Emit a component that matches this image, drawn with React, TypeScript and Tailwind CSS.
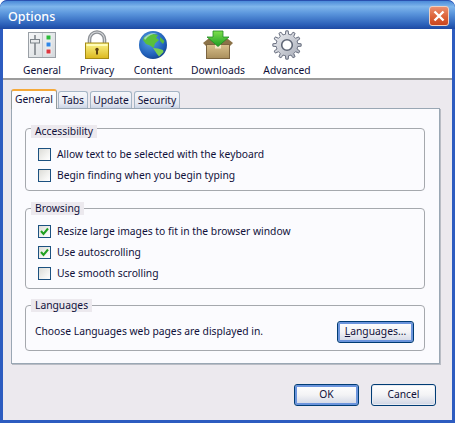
import React from "react";

function Check({ on, label }: { on?: boolean; label: string }) {
  return (
    <div className="flex items-center h-[13px] gap-[6px]">
      <span className="w-[13px] h-[13px] border border-[#1c5180] bg-[linear-gradient(135deg,#dcdcd7,#f6f6f4_70%,#ffffff)] flex items-center justify-center shrink-0">
        {on && (
          <svg width="11" height="11" viewBox="0 0 11 11">
            <path d="M2 5 L4.5 8 L9 2.5" fill="none" stroke="#21a121" strokeWidth="2" />
          </svg>
        )}
      </span>
      <span className="whitespace-nowrap mt-[1px]">{label}</span>
    </div>
  );
}

function Group({ title, className, legend, children }: { title: string; className: string; legend: string; children: React.ReactNode }) {
  return (
    <div className={`relative border border-[#a5a8ad] rounded-[4px] ${className}`}>
      <span className={`absolute left-[5px] px-[4px] bg-[#ece9ee] h-[13px] leading-[13px] whitespace-nowrap ${legend}`}>{title}</span>
      {children}
    </div>
  );
}

function Btn({ focus, className, children }: { focus?: boolean; className: string; children: React.ReactNode }) {
  return (
    <div
      className={`h-[22px] rounded-[3px] border border-[#003c74] flex items-center justify-center bg-[linear-gradient(180deg,#ffffff,#f3f3f5_50%,#cfd5e4)] ${focus ? "shadow-[inset_0_0_0_2px_#6b94dc]" : "shadow-[inset_0_0_0_1px_#e8ebf2]"} ${className}`}
    >
      {children}
    </div>
  );
}

function Tab({ active, className, children }: { active?: boolean; className: string; children: React.ReactNode }) {
  return active ? (
    <div className={`h-[20px] rounded-t-[3px] border-x border-[#919b9c] border-t-[2px] border-t-[#f5a93a] bg-[#fbfbfe] text-center leading-[17px] mb-[-1px] relative ${className}`}>
      {children}
    </div>
  ) : (
    <div className={`h-[17px] rounded-t-[3px] border-x border-t border-[#a5b5c5] bg-[linear-gradient(180deg,#f6f7fa,#e6e9f2_70%,#cbd5e6)] text-center leading-[16px] ${className}`}>
      {children}
    </div>
  );
}

const GeneralIcon = () => (
  <svg width="30" height="30" viewBox="0 0 30 30">
    <defs>
      <linearGradient id="gp" x1="0" y1="0" x2="1" y2="1">
        <stop offset="0" stopColor="#f6f7f8" />
        <stop offset="1" stopColor="#d4d8dc" />
      </linearGradient>
    </defs>
    <rect x="1.5" y="2.5" width="27" height="25" fill="url(#gp)" stroke="#9aa0a6" />
    <path d="M15.5 3v24" stroke="#c2c6ca" strokeWidth="1" />
    <path d="M8 5v20" stroke="#70767c" strokeWidth="1.4" />
    <rect x="3.5" y="9.5" width="9" height="3.5" fill="#e8eaec" stroke="#7d848a" />
    <rect x="19" y="5" width="5" height="5" fill="#2dbb3b" stroke="#eef0f0" />
    <rect x="19" y="12" width="5" height="5" fill="#2e86e8" stroke="#eef0f0" />
    <rect x="19" y="19" width="5" height="5" fill="#dd3740" stroke="#eef0f0" />
  </svg>
);

const PrivacyIcon = () => (
  <svg width="26" height="30" viewBox="0 0 26 30">
    <defs>
      <linearGradient id="ly" x1="0" y1="0" x2="0" y2="1">
        <stop offset="0" stopColor="#fbf48a" />
        <stop offset="1" stopColor="#dcb81e" />
      </linearGradient>
    </defs>
    <path d="M5.5 14V9.5a7.5 7.5 0 0 1 15 0V14" fill="none" stroke="#8b8f94" strokeWidth="3.6" />
    <path d="M5.5 14V9.5a7.5 7.5 0 0 1 15 0V14" fill="none" stroke="#d5d7da" strokeWidth="1.2" />
    <rect x="1.5" y="13" width="23" height="15.5" fill="url(#ly)" stroke="#a68b14" />
    <rect x="2.5" y="14" width="21" height="2" fill="#fffdb8" />
    <circle cx="13" cy="19.5" r="1.7" fill="#5d4210" />
    <rect x="12" y="20" width="2" height="4.5" fill="#5d4210" />
  </svg>
);

const ContentIcon = () => (
  <svg width="30" height="30" viewBox="0 0 30 30">
    <defs>
      <radialGradient id="gb" cx="0.4" cy="0.35" r="0.75">
        <stop offset="0" stopColor="#5aa5e8" />
        <stop offset="0.7" stopColor="#1f5eb8" />
        <stop offset="1" stopColor="#123a7a" />
      </radialGradient>
    </defs>
    <circle cx="15" cy="15" r="14" fill="url(#gb)" />
    <path d="M6 7 L13 3.5 L20 5 L18 8 L21 10 L17 13.5 L15.5 18 L12 15.5 L8 14 L5 10 Z" fill="#59c03c" />
    <path d="M15 18 L20 18.5 L25 20 L25.5 22 L21 26.5 L19 24 L17 21 Z" fill="#79cf52" />
    <path d="M22 7 L26.5 11 L25 14 L22 11 Z" fill="#57b83e" />
    <path d="M6 8 Q12 1.5 20 3.5 Q12 3 7 10 Z" fill="#c4e3f8" opacity="0.65" />
  </svg>
);

const DownloadsIcon = () => (
  <svg width="32" height="30" viewBox="0 0 32 30">
    <defs>
      <linearGradient id="bx" x1="0" y1="0" x2="0" y2="1">
        <stop offset="0" stopColor="#d8c08c" />
        <stop offset="1" stopColor="#a98e5c" />
      </linearGradient>
      <linearGradient id="ar" x1="0" y1="0" x2="0" y2="1">
        <stop offset="0" stopColor="#7ee04c" />
        <stop offset="1" stopColor="#1c9c24" />
      </linearGradient>
    </defs>
    <path d="M1 13 L6 9 H26 L31 13 L28 16 H4 Z" fill="#8b7248" />
    <rect x="4.5" y="14.5" width="23" height="14" fill="url(#bx)" stroke="#7b6440" />
    <rect x="13" y="14.5" width="6" height="4" fill="#efe3c2" />
    <path d="M11 1 H21 V7 H27 L16 16.5 L5 7 H11 Z" fill="url(#ar)" stroke="#1f8a22" strokeWidth="0.8" />
  </svg>
);

function gearPath() {
  const cx = 15, cy = 15, teeth = 12, ro = 14.2, ri = 10.8;
  let d = "";
  for (let i = 0; i < teeth; i++) {
    const a = (i / teeth) * Math.PI * 2;
    const w = (Math.PI * 2) / teeth;
    const pts = [
      [ri, a - w * 0.5],
      [ri, a - w * 0.28],
      [ro, a - w * 0.16],
      [ro, a + w * 0.16],
      [ri, a + w * 0.28],
    ];
    for (const [r, t] of pts) {
      d += `${d ? "L" : "M"}${(cx + r * Math.cos(t)).toFixed(2)} ${(cy + r * Math.sin(t)).toFixed(2)} `;
    }
  }
  return d + "Z";
}

const AdvancedIcon = () => (
  <svg width="30" height="30" viewBox="0 0 30 30">
    <defs>
      <linearGradient id="gr" x1="0" y1="0" x2="1" y2="1">
        <stop offset="0" stopColor="#f1f2f5" />
        <stop offset="1" stopColor="#a3a8b4" />
      </linearGradient>
    </defs>
    <path d={gearPath()} fill="url(#gr)" stroke="#6a7080" strokeWidth="1" />
    <circle cx="15" cy="15" r="5.3" fill="#fff" stroke="#5f6675" strokeWidth="1.6" />
  </svg>
);

function Tool({ icon, label, w, ml }: { icon: React.ReactNode; label: string; w: string; ml: string }) {
  return (
    <div className={`flex flex-col items-center ${w} ${ml}`}>
      <div className="h-[31px] flex items-center justify-center">{icon}</div>
      <span className="mt-[2px] leading-[16px] whitespace-nowrap">{label}</span>
    </div>
  );
}

export default function App() {
  return (
    <div className="[font-family:'Noto_Sans',sans-serif] w-[455px] h-[423px] text-[10.3px] text-[#10103a] flex flex-col overflow-hidden bg-[#2d5cc0] rounded-t-[7px]">
      <div className="h-[29px] shrink-0 rounded-t-[7px] border-t border-[#2a50b0] bg-[linear-gradient(180deg,#4a8ad8,#7fb6ec_20%,#5a95dc_45%,#2a5fb8_85%,#1d49a2)] flex items-center pl-[8px] pr-[6px]">
        <span className="text-white text-[12.5px] font-medium leading-none mt-[5px] flex-1">Options</span>
        <div className="w-[20px] h-[20px] rounded-[3px] border border-[#f0d0c0] bg-[linear-gradient(180deg,#ea8f70,#dc6238_55%,#c8451e)] flex items-center justify-center mt-[2px]">
          <svg width="14" height="14" viewBox="0 0 14 14">
            <path d="M2.5 2.5 L11.5 11.5 M11.5 2.5 L2.5 11.5" stroke="#fff" strokeWidth="2.4" />
          </svg>
        </div>
      </div>

      <div className="flex-1 mx-[3px] mb-[3px] bg-[#ece9ee] flex flex-col min-h-0">
        <div className="h-[51px] shrink-0 bg-white border-b-2 border-[#9c9c9c] flex">
          <Tool icon={<GeneralIcon />} label="General" w="w-[40px]" ml="ml-[19px]" />
          <Tool icon={<PrivacyIcon />} label="Privacy" w="w-[40px]" ml="ml-[15px]" />
          <Tool icon={<ContentIcon />} label="Content" w="w-[44px]" ml="ml-[14px]" />
          <Tool icon={<DownloadsIcon />} label="Downloads" w="w-[56px]" ml="ml-[15px]" />
          <Tool icon={<AdvancedIcon />} label="Advanced" w="w-[50px]" ml="ml-[16px]" />
        </div>

        <div className="ml-[8px] mr-[12px] mt-[8px] flex items-end gap-[1px] h-[20px] relative z-10">
          <Tab active className="w-[46px]">General</Tab>
          <Tab className="w-[30px]">Tabs</Tab>
          <Tab className="w-[42px] ml-[1px]">Update</Tab>
          <Tab className="w-[46px] ml-[1px]">Security</Tab>
        </div>

        <div className="ml-[8px] mr-[12px] h-[256px] border border-[#9aa7b4] shadow-[1px_1px_0_#b9bcc4] bg-[#fbfbfe] pl-[13px] pr-[14px] pt-[19px]">
          <Group title="Accessibility" legend="top-[-4px]" className="h-[63px] pl-[12px] pt-[19px]">
            <div className="flex flex-col gap-[8px]">
              <Check label="Allow text to be selected with the keyboard" />
              <Check label="Begin finding when you begin typing" />
            </div>
          </Group>
          <Group title="Browsing" legend="top-[-7px]" className="h-[81px] mt-[17px] pl-[12px] pt-[16px]">
            <div className="flex flex-col gap-[8px]">
              <Check on label="Resize large images to fit in the browser window" />
              <Check on label="Use autoscrolling" />
              <Check label="Use smooth scrolling" />
            </div>
          </Group>
          <Group title="Languages" legend="top-[-7px]" className="h-[46px] mt-[16px] pl-[9px] pr-[10px] pt-[15px]">
            <div className="flex items-center justify-between">
              <span className="whitespace-nowrap">Choose Languages web pages are displayed in.</span>
              <Btn focus className="w-[77px]">
                <span><span className="underline">L</span>anguages...</span>
              </Btn>
            </div>
          </Group>
        </div>

        <div className="mt-[20px] flex justify-end gap-[12px] pr-[16px]">
          <Btn focus className="w-[65px]">OK</Btn>
          <Btn className="w-[65px]">Cancel</Btn>
        </div>
      </div>
    </div>
  );
}
